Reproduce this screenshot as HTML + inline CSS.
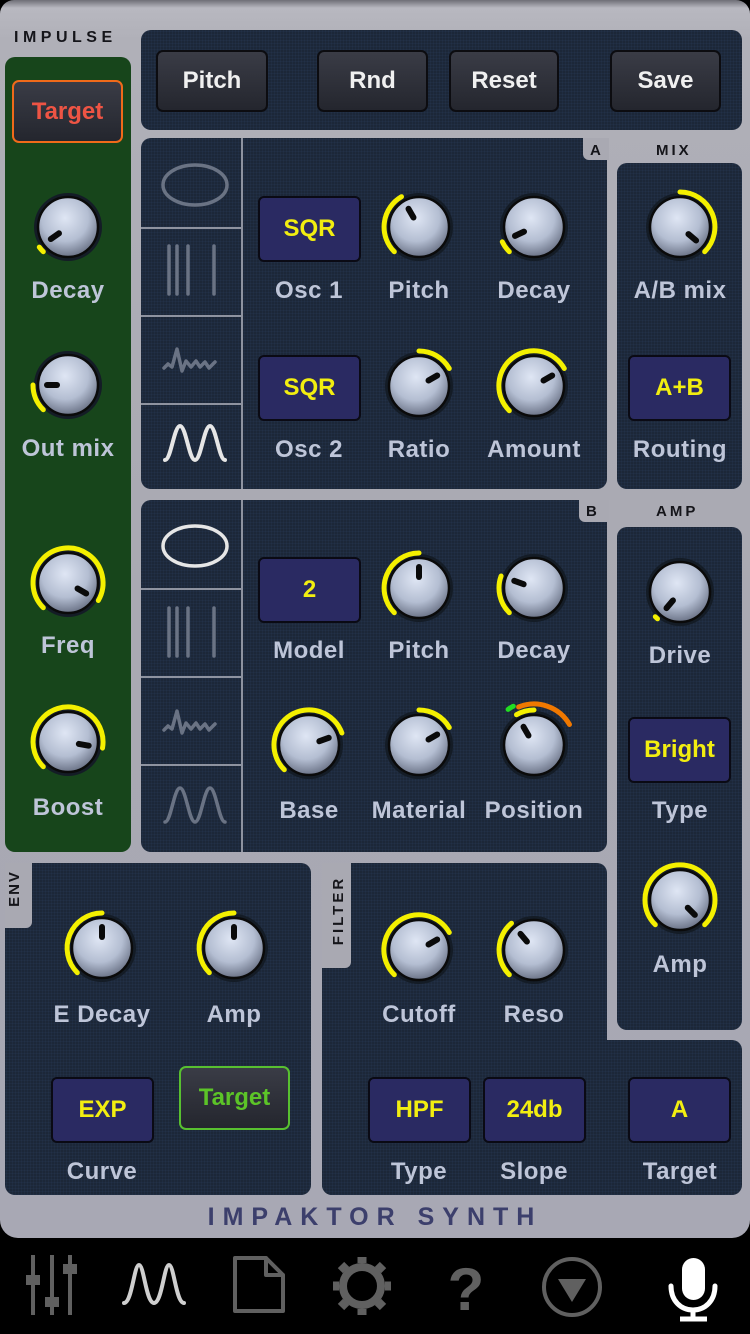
<!DOCTYPE html>
<html><head><meta charset="utf-8">
<style>
*{margin:0;padding:0;box-sizing:border-box}
body{width:750px;height:1334px;background:#000;position:relative;overflow:hidden;font-family:"Liberation Sans",sans-serif}
#metal{position:absolute;left:0;top:0;width:750px;height:1238px;border-radius:14px 14px 18px 18px;
background:linear-gradient(180deg,#6e6e76 0,#b8b8c0 8px,#b0b0b8 40px,#a9a9b2 600px,#a8a8b4 1238px)}
.p{position:absolute;background:#1c2738;border-radius:10px;background-image:radial-gradient(#223047 1px,transparent 1px);background-size:3px 3px}
.green{position:absolute;background:#17451b;border-radius:10px}
.lbl{position:absolute;color:#bec5d8;font-size:24px;font-weight:bold;text-align:center;width:140px;margin-left:-70px;line-height:28px;letter-spacing:.5px}
.vb{position:absolute;width:103px;height:66px;background:#2a2a62;border:2px solid #0a0a14;border-radius:6px;color:#f2ee10;font-weight:bold;font-size:24px;display:flex;align-items:center;justify-content:center}
.btn{position:absolute;height:62px;background:linear-gradient(#3a3c46,#24262e);border:2px solid #0c0c10;border-radius:7px;color:#f0f0f0;font-weight:bold;font-size:24px;display:flex;align-items:center;justify-content:center}
.sm{position:absolute;font-size:15px;font-weight:bold;color:#15151a;letter-spacing:3px}
.sep{position:absolute;background:#8e93a0}
svg{position:absolute}
</style></head><body>
<div id="metal"></div>
<div class="sm" style="left:14px;top:29px;font-size:16px;letter-spacing:4.5px">IMPULSE</div>
<div class="green" style="left:5px;top:57px;width:126px;height:795px"></div>
<div class="btn" style="left:12px;top:80px;width:111px;height:63px;border-color:#f06a1a;color:#ee5444">Target</div>

<div class="p" style="left:141px;top:30px;width:601px;height:100px"></div>
<div class="btn" style="left:156px;top:50px;width:112px">Pitch</div>
<div class="btn" style="left:317px;top:50px;width:111px">Rnd</div>
<div class="btn" style="left:449px;top:50px;width:110px">Reset</div>
<div class="btn" style="left:610px;top:50px;width:111px">Save</div>

<div class="p" style="left:141px;top:138px;width:466px;height:351px"></div>
<div style="position:absolute;left:583px;top:138px;width:26px;height:22px;background:#a9a9b2;border-radius:0 0 0 6px"></div>
<div class="sm" style="left:590px;top:142px;letter-spacing:0">A</div>
<div class="sep" style="left:241px;top:138px;width:2px;height:351px"></div>
<div class="sep" style="left:141px;top:227px;width:100px;height:2px"></div>
<div class="sep" style="left:141px;top:315px;width:100px;height:2px"></div>
<div class="sep" style="left:141px;top:403px;width:100px;height:2px"></div>
<div class="sm" style="left:656px;top:142px">MIX</div>
<div class="p" style="left:617px;top:163px;width:125px;height:326px"></div>

<div class="p" style="left:141px;top:500px;width:466px;height:352px"></div>
<div style="position:absolute;left:579px;top:500px;width:30px;height:22px;background:#a9a9b2;border-radius:0 0 0 6px"></div>
<div class="sm" style="left:586px;top:503px;letter-spacing:0">B</div>
<div class="sep" style="left:241px;top:500px;width:2px;height:352px"></div>
<div class="sep" style="left:141px;top:588px;width:100px;height:2px"></div>
<div class="sep" style="left:141px;top:676px;width:100px;height:2px"></div>
<div class="sep" style="left:141px;top:764px;width:100px;height:2px"></div>
<div class="sm" style="left:656px;top:503px">AMP</div>
<div class="p" style="left:617px;top:527px;width:125px;height:503px"></div>

<div class="p" style="left:5px;top:863px;width:306px;height:332px"></div>
<div style="position:absolute;left:5px;top:863px;width:27px;height:65px;background:#a9a9b2;border-radius:0 0 6px 0"></div>
<div class="sm" style="left:-4px;top:880px;transform:rotate(-90deg);letter-spacing:2px">ENV</div>
<div class="p" style="left:322px;top:863px;width:285px;height:332px"></div>
<div class="p" style="left:322px;top:1040px;width:420px;height:155px"></div>
<div style="position:absolute;left:322px;top:863px;width:29px;height:105px;background:#a9a9b2;border-radius:0 0 6px 0"></div>
<div class="sm" style="left:304px;top:902px;transform:rotate(-90deg);letter-spacing:3px">FILTER</div>

<div style="position:absolute;left:0;width:750px;top:1203px;text-align:center;font-size:25px;font-weight:bold;color:#3c3f6c;letter-spacing:8px">IMPAKTOR SYNTH</div>

<svg width="750" height="1334" style="left:0;top:0" fill="none" stroke-linecap="round" stroke-linejoin="round">
<g stroke="#6a7384" stroke-width="3.5">
<ellipse cx="195" cy="185" rx="32" ry="20"/>
<path d="M169 246V294M177 246V294M188 246V294M214 246V294"/>
<path d="M164 368l4-4 4 3 5-18 5 22 4-10 5 6 5-6 4 6 5-5 4 6 6-6" />
</g>
<path stroke="#e6e6e6" stroke-width="4" d="M165 460c6 0 9-34 15-34s9 34 15 34 9-34 15-34 9 34 15 34"/>
<g stroke="#6a7384" stroke-width="3.5">
<path d="M169 608V656M177 608V656M188 608V656M214 608V656"/>
<path d="M164 730l4-4 4 3 5-18 5 22 4-10 5 6 5-6 4 6 5-5 4 6 6-6"/>
<path d="M165 822c6 0 9-34 15-34s9 34 15 34 9-34 15-34 9 34 15 34"/>
</g>
<ellipse cx="195" cy="546" rx="32" ry="20" stroke="#e6e6e6" stroke-width="3.5"/>
<g fill="#606060" stroke="none">
<rect x="31" y="1255" width="4" height="60"/><rect x="50" y="1255" width="4" height="60"/><rect x="68" y="1255" width="4" height="60"/>
<rect x="26" y="1275" width="14" height="10"/><rect x="45" y="1297" width="14" height="10"/><rect x="63" y="1264" width="14" height="10"/>
</g>
<path stroke="#cfcfcf" stroke-width="4" d="M124 1303c8 0 10-38 15-38s7 38 15 38 10-38 15-38 7 38 15 38"/>
<path stroke="#606060" stroke-width="4" d="M235 1258h31l17 17v36h-48z M266 1258v17h17"/>
<g transform="translate(362 1286)"><circle r="19" stroke="#606060" stroke-width="8"/>
<g stroke="#606060" stroke-width="9" stroke-linecap="butt"><path d="M0-23V-29M0 23V29M-23 0H-29M23 0H29M16 16l5 5M-16-16l-5-5M16-16l5-5M-16 16l-5 5"/></g></g>
<text x="466" y="1310" fill="#606060" font-family="Liberation Sans" font-weight="bold" font-size="60" text-anchor="middle">?</text>
<circle cx="572" cy="1287" r="28" stroke="#606060" stroke-width="4"/>
<path d="M558 1279h28l-14 23z" fill="#606060"/>
<rect x="682" y="1258" width="23" height="42" rx="11.5" fill="#fff"/>
<path d="M671 1286c0 15 10 24 22 24s22-9 22-24" stroke="#fff" stroke-width="5"/>
<path d="M693 1310v9M680 1319h27" stroke="#fff" stroke-width="5" stroke-linecap="butt"/>
<g id="knobs"></g>
</svg>

<div class="vb" style="left:258px;top:196px">SQR</div>
<div class="vb" style="left:258px;top:355px">SQR</div>
<div class="vb" style="left:628px;top:355px">A+B</div>
<div class="vb" style="left:258px;top:557px">2</div>
<div class="vb" style="left:628px;top:717px">Bright</div>
<div class="vb" style="left:51px;top:1077px">EXP</div>
<div class="vb" style="left:368px;top:1077px">HPF</div>
<div class="vb" style="left:483px;top:1077px">24db</div>
<div class="vb" style="left:628px;top:1077px">A</div>
<div class="btn" style="left:179px;top:1066px;width:111px;height:64px;border-color:#58c030;color:#5cc428">Target</div>

<div class="lbl" style="left:68px;top:277px">Decay</div>
<div class="lbl" style="left:68px;top:435px">Out mix</div>
<div class="lbl" style="left:68px;top:632px">Freq</div>
<div class="lbl" style="left:68px;top:794px">Boost</div>
<div class="lbl" style="left:309px;top:277px">Osc 1</div>
<div class="lbl" style="left:419px;top:277px">Pitch</div>
<div class="lbl" style="left:534px;top:277px">Decay</div>
<div class="lbl" style="left:309px;top:436px">Osc 2</div>
<div class="lbl" style="left:419px;top:436px">Ratio</div>
<div class="lbl" style="left:534px;top:436px">Amount</div>
<div class="lbl" style="left:680px;top:277px">A/B mix</div>
<div class="lbl" style="left:680px;top:436px">Routing</div>
<div class="lbl" style="left:309px;top:637px">Model</div>
<div class="lbl" style="left:419px;top:637px">Pitch</div>
<div class="lbl" style="left:534px;top:637px">Decay</div>
<div class="lbl" style="left:309px;top:797px">Base</div>
<div class="lbl" style="left:419px;top:797px">Material</div>
<div class="lbl" style="left:534px;top:797px">Position</div>
<div class="lbl" style="left:680px;top:642px">Drive</div>
<div class="lbl" style="left:680px;top:797px">Type</div>
<div class="lbl" style="left:680px;top:951px">Amp</div>
<div class="lbl" style="left:102px;top:1001px">E Decay</div>
<div class="lbl" style="left:234px;top:1001px">Amp</div>
<div class="lbl" style="left:102px;top:1158px">Curve</div>
<div class="lbl" style="left:419px;top:1001px">Cutoff</div>
<div class="lbl" style="left:534px;top:1001px">Reso</div>
<div class="lbl" style="left:419px;top:1158px">Type</div>
<div class="lbl" style="left:534px;top:1158px">Slope</div>
<div class="lbl" style="left:680px;top:1158px">Target</div>

<script>
var K=[[68,227,-125,-135,-125],[68,385,-90,-135,-90],[68,583,120,-135,120],[68,742,100,-135,100],
[419,227,-30,-135,-30],[534,227,-115,-135,-115],[419,386,60,0,60],[534,386,60,-135,60],[680,227,130,0,135],
[419,588,0,-135,0],[534,588,-70,-135,-70],[309,745,70,-135,70],[419,745,60,0,60],[534,745,-30,-30,0],
[680,592,-140,-140,-135],[680,900,135,-135,135],[102,948,0,-135,0],[234,948,0,-135,0],[419,950,60,-135,60],[534,950,-40,-135,-40]];
function pt(cx,cy,r,a){a=a*Math.PI/180;return [cx+r*Math.sin(a),cy-r*Math.cos(a)]}
function arc(cx,cy,r,a0,a1){var p=pt(cx,cy,r,a0),q=pt(cx,cy,r,a1);return 'M'+p[0].toFixed(1)+' '+p[1].toFixed(1)+'A'+r+' '+r+' 0 '+((a1-a0)>180?1:0)+' 1 '+q[0].toFixed(1)+' '+q[1].toFixed(1)}
var s='<defs><radialGradient id="kg" cx="45%" cy="35%" r="65%"><stop offset="0" stop-color="#dfe6f4"/><stop offset=".6" stop-color="#b4bed2"/><stop offset="1" stop-color="#6c7488"/></radialGradient></defs>';
K.forEach(function(k){var cx=k[0],cy=k[1];
s+='<circle cx="'+cx+'" cy="'+cy+'" r="34" fill="#141c26"/>';
if(k[4]-k[3]>2)s+='<path d="'+arc(cx,cy,35,k[3],k[4])+'" stroke="#f4f000" stroke-width="5" fill="none"/>';
else s+='<path d="'+arc(cx,cy,35,k[3]-3,k[3]+3)+'" stroke="#f4f000" stroke-width="5" fill="none"/>';
s+='<circle cx="'+cx+'" cy="'+cy+'" r="30" fill="url(#kg)" stroke="#0a0a0a" stroke-width="2.5"/>';
var a=pt(cx,cy,11,k[2]),b=pt(cx,cy,21,k[2]);
s+='<line x1="'+a[0]+'" y1="'+a[1]+'" x2="'+b[0]+'" y2="'+b[1]+'" stroke="#0a0a0a" stroke-width="6" stroke-linecap="round"/>';});
s+='<path d="'+arc(534,745,41,-22,60)+'" stroke="#f07800" stroke-width="5" fill="none"/>';
s+='<path d="'+arc(534,745,44,-36,-28)+'" stroke="#22dd22" stroke-width="5" fill="none" stroke-linecap="round"/>';
document.getElementById('knobs').innerHTML=s;
</script>
</body></html>
